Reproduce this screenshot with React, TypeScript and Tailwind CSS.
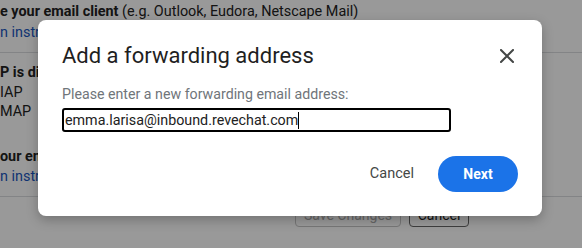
import React from "react";

const font = { fontFamily: "Roboto, 'Liberation Sans', Arial, sans-serif" };

function BackgroundPage() {
  return (
    <div className="flex flex-col text-[14.4px] text-[#222] leading-5 whitespace-nowrap">
      <div className="pt-[2px]">
        <span className="font-bold">e your email client</span> (e.g. Outlook, Eudora, Netscape Mail)
      </div>
      <div className="pt-[1px] pb-[9px] border-b border-[#dadce0] text-[#1a57c0]">n instructions</div>
      <div className="pt-[10px] font-bold">P is disabled</div>
      <div>IAP</div>
      <div className="-mt-[1px]">MAP</div>
      <div className="pt-[25px] font-bold">our email client</div>
      <div className="pb-[9px] border-b border-[#dadce0] text-[#1a57c0]">n instructions</div>
      <div className="flex gap-2 pt-[6px] pl-[295px]">
        <button className="h-6 w-[106px] rounded-sm border border-[#c6c6c6] text-[#aaa] text-[14px]">
          Save Changes
        </button>
        <button className="h-6 w-[60px] rounded-sm border border-[#666] text-[#222] text-[14px]">
          Cancel
        </button>
      </div>
    </div>
  );
}

function CloseIcon() {
  return (
    <svg width="14" height="14" viewBox="0 0 14 14" className="text-[#444746]">
      <path d="M1 1 L13 13 M13 1 L1 13" stroke="currentColor" strokeWidth="2" strokeLinecap="square" />
    </svg>
  );
}

export default function App() {
  return (
    <div className="relative w-[582px] h-[248px] overflow-hidden bg-white" style={font}>
      <BackgroundPage />
      <div className="absolute inset-0 bg-black/40" />
      <div className="absolute left-[38px] top-[20px] w-[504px] rounded-lg bg-white shadow-[0_4px_12px_rgba(0,0,0,0.25)] pl-6 pr-6 pt-[22px] pb-6">
        <div className="flex items-center justify-between">
          <h2 className="text-[22px] leading-7 text-[#1f1f1f]">Add a forwarding address</h2>
          <button className="w-6 h-6 -mr-[1px] flex items-center justify-center">
            <CloseIcon />
          </button>
        </div>
        <p className="mt-[14px] text-[14.2px] leading-5 text-[#70757a]">Please enter a new forwarding email address:</p>
        <div className="mt-[4px] w-[389px] h-6 rounded-[3px] border-2 border-black flex items-center pl-[1px]">
          <span className="text-[14.3px] text-[#222] leading-5">emma.larisa@inbound.revechat.com</span>
          <span className="w-px h-[17px] bg-black" />
        </div>
        <div className="mt-6 flex justify-end items-center gap-[12px]">
          <button className="h-9 px-3 text-[14.5px] text-[#444746]">Cancel</button>
          <button className="h-9 w-20 rounded-full bg-[#1b73e8] text-white text-[14px] font-bold">Next</button>
        </div>
      </div>
    </div>
  );
}
